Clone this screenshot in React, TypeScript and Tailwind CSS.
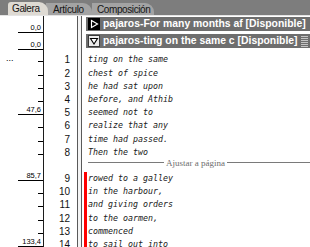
const sans = "font-['Liberation_Sans',Arial,sans-serif]";

type Row =
  | { kind: "header"; title: string; open: boolean; label: string }
  | { kind: "gap" }
  | { kind: "text"; n: number; text: string; mark?: "tick" | "long" | "none"; label?: string; red?: boolean; dots?: boolean }
  | { kind: "sep" };

const rows: Row[] = [
  { kind: "header", title: "pajaros-For many months af [Disponible]", open: false, label: "0,0" },
  { kind: "header", title: "pajaros-ting on the same c [Disponible]", open: true, label: "0,0" },
  { kind: "gap" },
  { kind: "text", n: 1, text: "ting on the same", mark: "tick", dots: true },
  { kind: "text", n: 2, text: "chest of spice", mark: "tick" },
  { kind: "text", n: 3, text: "he had sat upon", mark: "tick" },
  { kind: "text", n: 4, text: "before, and Athib", mark: "tick" },
  { kind: "text", n: 5, text: "seemed not to", mark: "long", label: "47,6" },
  { kind: "text", n: 6, text: "realize that any", mark: "tick" },
  { kind: "text", n: 7, text: "time had passed.", mark: "tick" },
  { kind: "text", n: 8, text: "Then the two", mark: "tick" },
  { kind: "sep" },
  { kind: "text", n: 9, text: "rowed to a galley", mark: "long", label: "85,7", red: true },
  { kind: "text", n: 10, text: "in the harbour,", mark: "tick", red: true },
  { kind: "text", n: 11, text: "and giving orders", mark: "tick", red: true },
  { kind: "text", n: 12, text: "to the oarmen,", mark: "tick", red: true },
  { kind: "text", n: 13, text: "commenced", mark: "tick", red: true },
  { kind: "text", n: 14, text: "to sail out into", mark: "long", label: "133,4", red: true },
];

function rowH(r: Row) {
  if (r.kind === "header") return "h-[17px]";
  if (r.kind === "gap") return "h-[3.4px]";
  return "h-[13.2px]";
}

function Closed() {
  return (
    <svg width="12" height="12" viewBox="0 0 12 12" className="shrink-0">
      <rect x="0" y="0" width="12" height="12" fill="#000" />
      <polygon points="3.5,2.5 9.5,6 3.5,9.5" fill="none" stroke="#fff" strokeWidth="1.2" />
    </svg>
  );
}

function Open() {
  return (
    <svg width="12" height="12" viewBox="0 0 12 12" className="shrink-0">
      <rect x="0.5" y="0.5" width="11" height="11" fill="#ececec" stroke="#3a3a3a" />
      <polygon points="2.5,3.5 9.5,3.5 6,9" fill="#fff" stroke="#000" strokeWidth="1.1" />
    </svg>
  );
}

function Grip() {
  return (
    <div className="ml-auto mr-[2px] flex h-[11px] w-[7px] flex-col justify-between">
      {[0, 1, 2, 3, 4, 5].map((i) => (
        <div key={i} className="h-px bg-[#c4c4c4]" />
      ))}
    </div>
  );
}

export default function App() {
  return (
    <div className={`h-[247px] w-[310px] overflow-hidden bg-white ${sans}`}>
      {/* tab bar */}
      <div className="flex h-[16px] items-end border-b border-[#e4e4e4] bg-[#7d7d7d] pl-[8px] text-[10px] tracking-[-0.4px] text-[#151515]">
        <div className="z-10 flex h-[13px] w-[40px] items-center rounded-tl-[3px] rounded-tr-[9px] bg-[#dedad3] pl-[4px]">Galera</div>
        <div className="-ml-[2px] flex h-[12px] w-[46px] items-center rounded-tr-[9px] bg-[#a3a3a3] pl-[7px]">Artículo</div>
        <div className="flex h-[12px] w-[62px] items-center rounded-tr-[9px] bg-[#a3a3a3] pl-[5px]">Composición</div>
      </div>

      <div className="flex">
        {/* ruler */}
        <div className="w-[44px] shrink-0 border-r border-[#1c1c1c]">
          {rows.map((r, i) => {
            if (r.kind === "header")
              return (
                <div key={i} className={`${rowH(r)} flex items-end justify-end`}>
                  <div className="flex h-[9px] w-[25px] items-end justify-end border-b border-black pr-[2px] text-[7.5px] leading-[8px]">{r.label}</div>
                </div>
              );
            if (r.kind === "gap" || r.kind === "sep") return <div key={i} className={rowH(r)} />;
            return (
              <div key={i} className={`${rowH(r)} relative flex justify-end`}>
                {r.dots && <span className="absolute left-[6px] top-[1px] text-[9px] leading-[8px]">...</span>}
                {r.mark === "long" ? (
                  <div className="flex h-[9px] w-[25px] items-end justify-end border-b border-black pr-[2px] text-[7.5px] leading-[8px]">{r.label}</div>
                ) : (
                  <div className="h-[9px] w-[5px] border-b border-black" />
                )}
              </div>
            );
          })}
        </div>

        {/* line numbers */}
        <div className="w-[33px] shrink-0 pr-[7px] text-right text-[10px] text-[#111]">
          {rows.map((r, i) => (
            <div key={i} className={`${rowH(r)} leading-[13.2px]`}>
              {r.kind === "text" ? r.n : ""}
            </div>
          ))}
        </div>

        {/* double rule */}
        <div className="w-[5px] shrink-0 border-x border-[#5a5a5a] bg-[#f4f4f4]" />

        {/* text column */}
        <div className="min-w-0 flex-1">
          {rows.map((r, i) => {
            if (r.kind === "header")
              return (
                <div key={i} className={`${rowH(r)} pl-[4px] pt-[1px]`}>
                  <div className="flex h-[14px] items-center gap-[3px] bg-[#6e6e6e] pl-[2px]">
                    {r.open ? <Open /> : <Closed />}
                    <span className="whitespace-nowrap text-[10.4px] font-bold text-white">{r.title}</span>
                    {r.open && <Grip />}
                  </div>
                </div>
              );
            if (r.kind === "gap") return <div key={i} className={rowH(r)} />;
            if (r.kind === "sep")
              return (
                <div key={i} className={`${rowH(r)} flex items-center pl-[6px] pb-[5px]`}>
                  <div className="h-px flex-1 bg-[#7a7a7a]" />
                  <span className="px-[2px] font-['Liberation_Serif',serif] text-[9px] leading-[10px] text-[#6e6e6e]">Ajustar a página</span>
                  <div className="h-px w-[83px] bg-[#7a7a7a]" />
                </div>
              );
            return (
              <div
                key={i}
                className={`${rowH(r)} ml-[2px] whitespace-nowrap border-l-[3px] pl-[1px] font-['DejaVu_Sans_Mono',monospace] text-[8.3px] italic leading-[13.2px] text-[#1a1a1a] ${r.red ? "border-[#ff0000]" : "border-transparent"}`}
              >
                {r.text}
              </div>
            );
          })}
        </div>
      </div>
    </div>
  );
}
